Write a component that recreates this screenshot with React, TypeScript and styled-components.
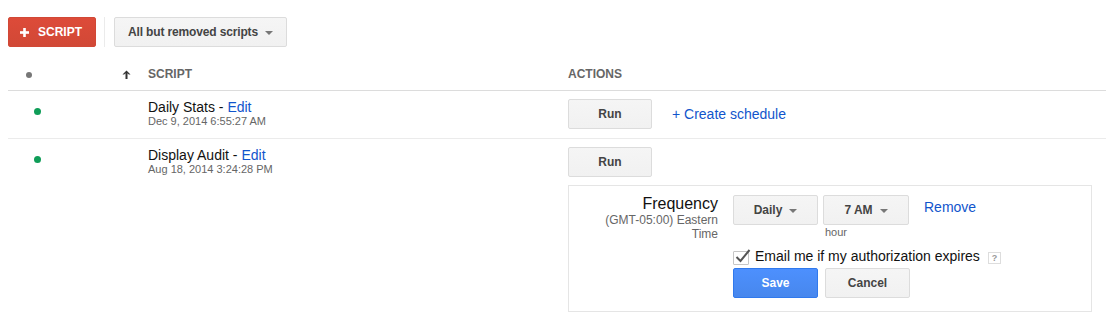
import React from 'react';
import styled, { createGlobalStyle, css } from 'styled-components';

const GlobalStyle = createGlobalStyle`
  body {
    margin: 0;
    background: #fff;
    font-family: 'Liberation Sans', Arial, sans-serif;
    color: #222;
  }
`;

const Page = styled.div`
  padding: 17px 11px 0 8px;
  width: 1098px;
`;

const Toolbar = styled.div`
  display: flex;
  align-items: stretch;
  height: 30px;
`;

const buttonBase = css`
  box-sizing: border-box;
  height: 30px;
  border-radius: 2px;
  font-family: 'Liberation Sans', Arial, sans-serif;
  font-weight: 700;
  display: inline-flex;
  align-items: center;
  justify-content: center;
  cursor: pointer;
  padding: 0;
`;

const RedButton = styled.button`
  ${buttonBase};
  width: 88px;
  font-size: 12px;
  color: #fff;
  background: linear-gradient(#dd4b39, #d14836);
  border: 1px solid #d14836;
  gap: 9px;
  padding-right: 2px;
`;

const Separator = styled.div`
  width: 1px;
  background: #ebebeb;
  margin: 0 9px 0 8px;
`;

type GreyProps = { $w?: number };

const GreyButton = styled.button<GreyProps>`
  ${buttonBase};
  width: ${(p) => (p.$w ? `${p.$w}px` : 'auto')};
  font-size: 12px;
  color: #444;
  background: linear-gradient(#f5f5f5, #f1f1f1);
  border: 1px solid #dcdcdc;
`;

const DropButton = styled(GreyButton)`
  gap: 7px;
`;

const FilterButton = styled(GreyButton)`
  gap: 7px;
  letter-spacing: -0.15px;
`;

const BlueButton = styled.button`
  ${buttonBase};
  width: 85px;
  font-size: 12px;
  color: #fff;
  background: linear-gradient(#4d90fe, #4787ed);
  border: 1px solid #3079ed;
`;

const Caret = styled.span`
  width: 0;
  height: 0;
  border-left: 4px solid transparent;
  border-right: 4px solid transparent;
  border-top: 4px solid #777;
  margin-top: 1px;
`;

const Grid = styled.div`
  display: grid;
  grid-template-columns: 107px 33px 420px 1fr;
`;

const HeaderRow = styled(Grid)`
  margin-top: 11px;
  height: 32px;
  align-items: center;
  border-bottom: 1px solid #dcdcdc;
  font-size: 12px;
  font-weight: 700;
  color: #666;
  line-height: 14px;
`;

const Row = styled(Grid)`
  box-sizing: border-box;
  padding: 8px 0 9px;
  border-bottom: 1px solid #ebebeb;
  align-items: start;
`;

const LastRow = styled(Grid)`
  padding: 8px 0 9px;
  align-items: start;
`;

const Dot = styled.span<{ $header?: boolean }>`
  display: block;
  width: ${(p) => (p.$header ? 6 : 7)}px;
  height: ${(p) => (p.$header ? 6 : 7)}px;
  border-radius: 50%;
  background: ${(p) => (p.$header ? '#777' : '#0f9d58')};
  margin-left: ${(p) => (p.$header ? 18 : 26)}px;
  margin-top: ${(p) => (p.$header ? 2 : 9)}px;
`;

const ArrowCell = styled.div`
  display: flex;
  align-items: center;
  padding-left: 7px;
`;

const ScriptName = styled.div`
  font-size: 14px;
  line-height: 16px;
  color: #111;
`;

const Link = styled.a`
  color: #15c;
  text-decoration: none;
  cursor: pointer;
  font-size: 14px;
`;

const DateText = styled.div`
  font-size: 11px;
  line-height: 13px;
  color: #666;
`;

const Actions = styled.div`
  display: flex;
  flex-direction: column;
  align-items: flex-start;
`;

const ActionLine = styled.div`
  display: flex;
  align-items: center;
  gap: 20px;
`;

const Panel = styled.div`
  box-sizing: border-box;
  margin-top: 8px;
  width: 524px;
  border: 1px solid #e5e5e5;
  padding: 9px 0 13px;
  display: grid;
  grid-template-columns: 149px 1fr;
  column-gap: 15px;
`;

const LabelCol = styled.div`
  text-align: right;
`;

const LabelTitle = styled.div`
  font-size: 16px;
  line-height: 18px;
  color: #111;
`;

const LabelNote = styled.div`
  font-size: 12px;
  line-height: 14px;
  color: #666;
`;

const Controls = styled.div`
  display: flex;
  flex-direction: column;
`;

const DropRow = styled.div`
  display: flex;
  align-items: flex-start;
`;

const Field = styled.div<{ $gap?: number }>`
  display: flex;
  flex-direction: column;
  margin-right: ${(p) => p.$gap ?? 5}px;
`;

const Hint = styled.span`
  font-size: 11px;
  line-height: 13px;
  color: #666;
  padding-left: 2px;
  margin-top: 1px;
`;

const RemoveLink = styled(Link)`
  margin-top: 4px;
  line-height: 16px;
`;

const CheckRow = styled.label`
  display: flex;
  align-items: center;
  margin-top: 9px;
  height: 16px;
  font-size: 14px;
  color: #111;
`;

const CheckBox = styled.span`
  position: relative;
  box-sizing: border-box;
  width: 16px;
  height: 14px;
  border: 1px solid #c6c6c6;
  border-radius: 1px;
  margin-right: 6px;
  margin-top: 4px;
  background: #fff;

  svg {
    position: absolute;
    left: 0;
    top: -5px;
  }
`;

const HelpIcon = styled.span`
  box-sizing: border-box;
  width: 13px;
  height: 12px;
  margin-left: 8px;
  margin-top: 4px;
  border: 1px solid #ddd;
  font-size: 9px;
  line-height: 10px;
  text-align: center;
  color: #999;
  font-weight: 700;
`;

const ButtonRow = styled.div`
  display: flex;
  gap: 7px;
  margin-top: 4px;
`;

const PlusIcon = () => (
  <svg width="9" height="9" viewBox="0 0 9 9">
    <rect x="3.2" y="0" width="2.6" height="9" fill="#fff" />
    <rect x="0" y="3.2" width="9" height="2.6" fill="#fff" />
  </svg>
);

const UpArrow = () => (
  <svg width="9" height="9" viewBox="0 0 9 9">
    <path d="M4.5 0.5 L8.5 4.5 L6.8 4.5 L5.5 3.3 L5.5 9 L3.5 9 L3.5 3.3 L2.2 4.5 L0.5 4.5 Z" fill="#333" />
  </svg>
);

const CheckMark = () => (
  <svg width="18" height="17" viewBox="0 0 18 17">
    <path d="M2.5 10 L6.5 14 L15.5 3" stroke="#555" strokeWidth="2" fill="none" />
  </svg>
);

type Script = { name: string; date: string };

const scripts: Script[] = [
  { name: 'Daily Stats', date: 'Dec 9, 2014 6:55:27 AM' },
  { name: 'Display Audit', date: 'Aug 18, 2014 3:24:28 PM' },
];

const ScriptCell: React.FC<{ script: Script }> = ({ script }) => (
  <div>
    <ScriptName>
      {script.name} - <Link>Edit</Link>
    </ScriptName>
    <DateText>{script.date}</DateText>
  </div>
);

const SchedulePanel = () => (
  <Panel>
    <LabelCol>
      <LabelTitle>Frequency</LabelTitle>
      <LabelNote>(GMT-05:00) Eastern</LabelNote>
      <LabelNote>Time</LabelNote>
    </LabelCol>
    <Controls>
      <DropRow>
        <Field>
          <DropButton $w={85}>
            Daily <Caret />
          </DropButton>
        </Field>
        <Field $gap={15}>
          <DropButton $w={86}>
            7 AM <Caret />
          </DropButton>
          <Hint>hour</Hint>
        </Field>
        <RemoveLink>Remove</RemoveLink>
      </DropRow>
      <CheckRow>
        <CheckBox>
          <CheckMark />
        </CheckBox>
        Email me if my authorization expires
        <HelpIcon>?</HelpIcon>
      </CheckRow>
      <ButtonRow>
        <BlueButton>Save</BlueButton>
        <GreyButton $w={85}>Cancel</GreyButton>
      </ButtonRow>
    </Controls>
  </Panel>
);

export default function App() {
  return (
    <Page>
      <GlobalStyle />
      <Toolbar>
        <RedButton>
          <PlusIcon />
          SCRIPT
        </RedButton>
        <Separator />
        <FilterButton $w={173}>
          All but removed scripts <Caret />
        </FilterButton>
      </Toolbar>

      <HeaderRow>
        <div>
          <Dot $header />
        </div>
        <ArrowCell>
          <UpArrow />
        </ArrowCell>
        <div>SCRIPT</div>
        <div>ACTIONS</div>
      </HeaderRow>

      <Row>
        <Dot />
        <div />
        <ScriptCell script={scripts[0]} />
        <Actions>
          <ActionLine>
            <GreyButton $w={84}>Run</GreyButton>
            <Link>+ Create schedule</Link>
          </ActionLine>
        </Actions>
      </Row>

      <LastRow>
        <Dot />
        <div />
        <ScriptCell script={scripts[1]} />
        <Actions>
          <GreyButton $w={84}>Run</GreyButton>
          <SchedulePanel />
        </Actions>
      </LastRow>
    </Page>
  );
}
